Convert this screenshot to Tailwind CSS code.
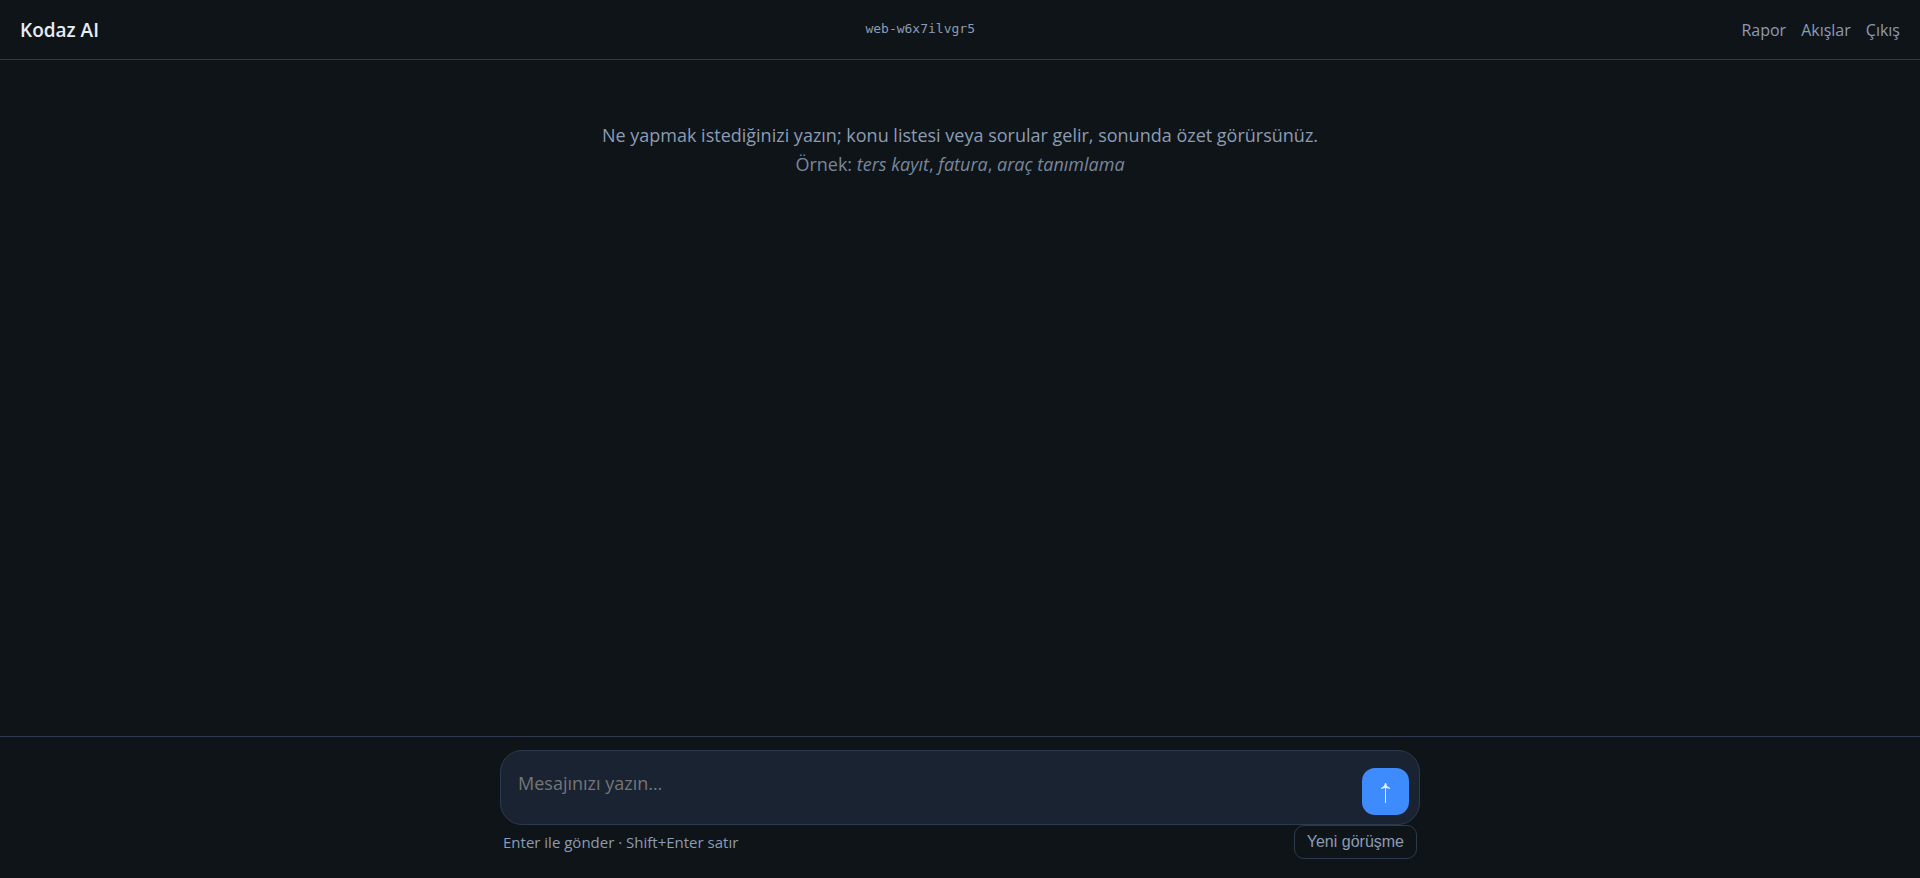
<!DOCTYPE html>
<html lang="tr">
<head>
  <meta charset="UTF-8" />
  <meta name="viewport" content="width=device-width, initial-scale=1.0" />
  <title>Kodaz AI</title>
  <script src="https://cdn.jsdelivr.net/npm/@tailwindcss/browser@4"></script>
</head>
<body class="min-h-screen flex flex-col bg-[#0f1419] text-[#8b9cb3] font-['Open_Sans',sans-serif]">
  <!-- Header -->
  <header class="flex h-[60px] items-center justify-between border-b border-[#2d3a4d] px-5">
    <h1 class="pt-0.5 text-[19px] font-semibold text-[#e7ecf3]">Kodaz AI</h1>
    <span class="pb-0.5 text-[13px] font-['DejaVu_Sans_Mono',monospace]">web-w6x7ilvgr5</span>
    <nav class="flex gap-[15px] text-[16px]">
      <a href="#rapor" class="hover:text-white">Rapor</a>
      <a href="#akislar" class="hover:text-white">Akışlar</a>
      <a href="#cikis" class="hover:text-white">Çıkış</a>
    </nav>
  </header>

  <!-- Messages -->
  <main class="flex-1 px-4 pt-[61px] text-center text-[18px] leading-[29px]">
    <p>Ne yapmak istediğinizi yazın; konu listesi veya sorular gelir, sonunda özet görürsünüz.</p>
    <p class="opacity-85">Örnek: <em>ters kayıt</em>, <em>fatura</em>, <em>araç tanımlama</em></p>
  </main>

  <!-- Composer -->
  <footer class="border-t border-[#2d3a4d] px-4 pt-[13px] pb-[19px]">
    <form class="mx-auto max-w-[920px]" onsubmit="return false">
      <div class="flex items-end rounded-[22px] border border-[#2d3a4d] bg-[#1a2332] pt-2 pr-[10px] pb-[9px] pl-[17px]">
        <textarea id="message" rows="1" aria-label="Mesaj" placeholder="Mesajınızı yazın…" class="h-14 flex-1 resize-none bg-transparent py-[11px] text-[18px] leading-[27px] text-[#e7ecf3] placeholder:text-[#757575] focus:outline-none"></textarea>
        <button type="submit" aria-label="Gönder" class="flex size-[47px] items-center justify-center rounded-[13px] bg-[#3d8bfd] pt-0.5 text-[#e7ecf3]">
          <svg class="h-5 w-[9px]" viewBox="0 0 9 20" fill="currentColor">
            <path d="M4 20V5L0 6V5L3 3L4 0H5L6 3L9 5V6L5 5V20Z" />
          </svg>
        </button>
      </div>
      <div class="flex items-center justify-between px-[3px]">
        <span class="text-[15px]">Enter ile gönder · Shift+Enter satır</span>
        <button type="button" class="h-[34px] rounded-[10px] border border-[#2d3a4d] px-3 text-[16px] font-['Liberation_Sans',sans-serif]">Yeni görüşme</button>
      </div>
    </form>
  </footer>
</body>
</html>
